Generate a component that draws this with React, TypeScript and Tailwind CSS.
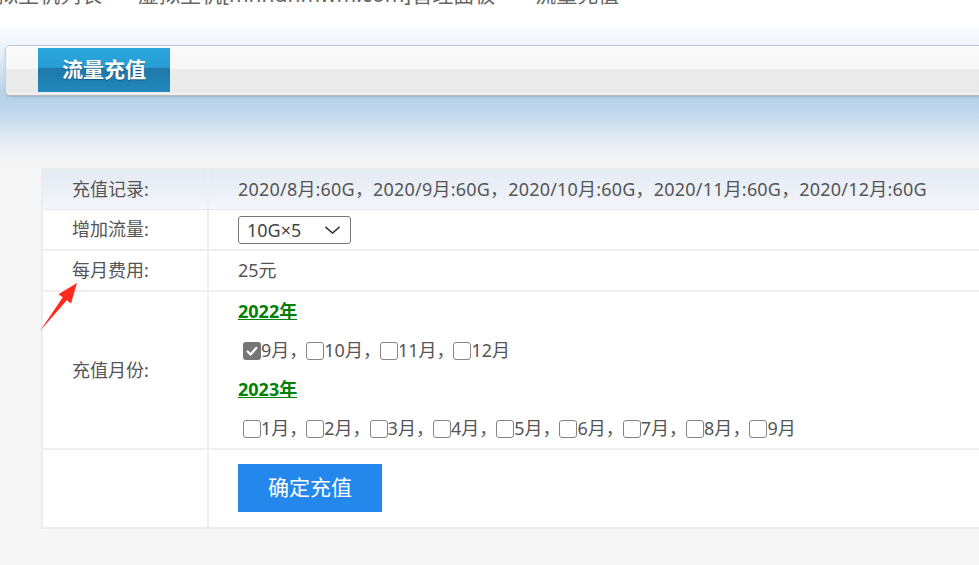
import React from "react";

function Box({ checked }: { checked?: boolean }) {
  return checked ? (
    <span className="inline-flex h-[18px] w-[18px] shrink-0 items-center justify-center rounded-[3px] bg-[#767676]">
      <svg viewBox="0 0 16 16" className="h-[14px] w-[14px]">
        <path d="M3 8.6 L6.4 12 L13 4.4" fill="none" stroke="white" strokeWidth="2.6" strokeLinecap="round" strokeLinejoin="round" />
      </svg>
    </span>
  ) : (
    <span className="inline-block h-[18px] w-[18px] shrink-0 rounded-[3px] border-[1.5px] border-[#858585] bg-white" />
  );
}

function MonthRow({ months, checked }: { months: string[]; checked?: string }) {
  return (
    <div className="flex h-[39px] items-center pl-[5px]">
      {months.map((m, i) => (
        <label key={m} className="mr-[-1px] flex items-center">
          <Box checked={checked === m} />
          <span>
            {m}
            {i < months.length - 1 ? "，" : ""}
          </span>
        </label>
      ))}
    </div>
  );
}

export default function App() {
  return (
    <div className="relative h-[565px] w-[979px] overflow-hidden bg-[#f6f6f6] font-['Noto_Sans','Noto_Sans_CJK_SC',sans-serif] text-[18px] text-[#555]">
      {/* breadcrumb, mostly scrolled out of view */}
      <div className="h-[27px] overflow-hidden bg-white">
        <div className="-ml-[24px] -mt-[18px] flex whitespace-nowrap text-[21px] leading-[24px] text-[#666]">
          <span>虚拟主机列表</span>
          <span className="mx-[12px]">&gt;</span>
          <span>虚拟主机[mnnuhmwm.com]管理面板</span>
          <span className="mx-[14px]">&gt;</span>
          <span>流量充值</span>
        </div>
      </div>

      {/* header band */}
      <div className="h-[141px] bg-[linear-gradient(to_bottom,#fbfdff_0px,#eef4fa_18px,#b4d0e8_70px,#c6dbed_90px,#e4ebf2_113px,#f5f5f5_133px)] pl-[5px] pt-[18px]">
        <div className="h-[51px] rounded-l-[5px] border-y border-l border-t-[#c3c7cb] border-b-[#b3b8bd] border-l-[#d0d3d6] bg-[linear-gradient(to_bottom,#fafafa_0%,#f7f7f7_46%,#ebebeb_47%,#e9e9e9_92%,#f2f2f2_100%)] pl-[32px] pt-[2px] shadow-[0_1px_2px_rgba(0,0,0,0.15)]">
          <div className="flex h-[44px] w-[132px] items-center justify-center bg-[linear-gradient(to_bottom,#2ba7de_0%,#279dd3_44%,#1f78a8_46%,#1f7fb1_70%,#2289be_100%)] text-[21px] font-bold text-white [text-shadow:0_1px_1px_rgba(0,40,70,0.5)]">
            流量充值
          </div>
        </div>
      </div>

      {/* form table */}
      <div className="ml-[41px] w-[1000px] border-2 border-[#ececec] bg-white">
        <div className="flex h-[40px] border-b border-[#e4e9ef] bg-[linear-gradient(to_bottom,#e5ebf4,#f3f6fa)]">
          <div className="flex w-[166px] items-center border-r-2 border-[#edf0f4] pl-[29px]">充值记录:</div>
          <div className="flex items-center pl-[29px] tracking-[0.2px]">
            2020/8月:60G，2020/9月:60G，2020/10月:60G，2020/11月:60G，2020/12月:60G
          </div>
        </div>

        <div className="flex h-[41px] border-b-2 border-[#efefef]">
          <div className="flex w-[166px] items-center border-r-2 border-[#efefef] pl-[29px]">增加流量:</div>
          <div className="flex items-center pl-[29px]">
            <div className="relative">
              <select className="h-[28px] w-[113px] appearance-none rounded-[3px] border border-[#767676] bg-white pl-[8px] text-[18px] leading-[26px] text-[#444] outline-none">
                <option>10G×5</option>
              </select>
              <svg viewBox="0 0 18 9" className="pointer-events-none absolute right-[10px] top-[10px] h-[8px] w-[17px]">
                <path d="M1 1 L9 8 L17 1" fill="none" stroke="#333" strokeWidth="1.6" />
              </svg>
            </div>
          </div>
        </div>

        <div className="flex h-[41px] border-b-2 border-[#efefef]">
          <div className="flex w-[166px] items-center border-r-2 border-[#efefef] pl-[29px]">每月费用:</div>
          <div className="flex items-center pl-[29px]">25元</div>
        </div>

        <div className="flex border-b-2 border-[#efefef]">
          <div className="flex w-[166px] items-center border-r-2 border-[#efefef] pl-[29px]">充值月份:</div>
          <div className="flex flex-col pl-[29px]">
            <div className="flex h-[39px] items-center">
              <a className="font-bold text-[#008000] underline">2022年</a>
            </div>
            <MonthRow months={["9月", "10月", "11月", "12月"]} checked="9月" />
            <div className="flex h-[39px] items-center">
              <a className="font-bold text-[#008000] underline">2023年</a>
            </div>
            <MonthRow months={["1月", "2月", "3月", "4月", "5月", "6月", "7月", "8月", "9月"]} />
          </div>
        </div>

        <div className="flex h-[77px]">
          <div className="w-[166px] border-r-2 border-[#efefef]" />
          <div className="pl-[29px] pt-[14px]">
            <button className="h-[48px] w-[144px] bg-[#2387ec] text-[21px] text-white">确定充值</button>
          </div>
        </div>
      </div>

      {/* red annotation arrow */}
      <svg className="pointer-events-none absolute left-0 top-0" width="979" height="565">
        <polygon points="40,331 62.8,297.3 58.5,294.2 77,283 71,303.5 66.8,300.3" fill="#ff2a1a" />
      </svg>
    </div>
  );
}
